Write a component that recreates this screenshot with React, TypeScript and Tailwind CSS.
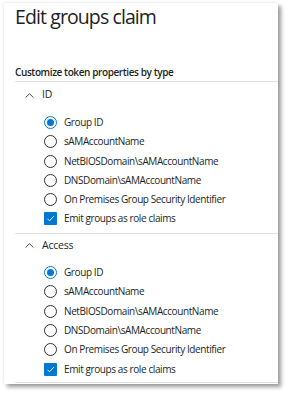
const options = [
    'Group ID',
    'sAMAccountName',
    'NetBIOSDomain\\sAMAccountName',
    'DNSDomain\\sAMAccountName',
    'On Premises Group Security Identifier',
];

const Radio: React.FC<{ checked?: boolean }> = ({ checked }) => (
    <span
        className={`flex h-[13px] w-[13px] shrink-0 items-center justify-center rounded-full border ${
            checked ? 'border-[#0078d4]' : 'border-[#323130]'
        }`}
    >
        {checked && <span className="h-[7px] w-[7px] rounded-full bg-[#0078d4]" />}
    </span>
);

const Checkbox: React.FC = () => (
    <span className="flex h-[13px] w-[13px] shrink-0 items-center justify-center rounded-[1px] bg-[#0078d4]">
        <svg width="9" height="9" viewBox="0 0 9 9" fill="none">
            <path d="M1.5 4.8 L3.5 6.8 L7.8 2.2" stroke="white" strokeWidth="0.9" />
        </svg>
    </span>
);

const Section: React.FC<{ title: string; headerClass: string; rowsClass: string }> = ({
    title,
    headerClass,
    rowsClass,
}) => (
    <div className="ml-[11px] border-b border-[#e1dfdd]">
        <div className={`flex items-center ${headerClass}`}>
            <svg width="9" height="5" viewBox="0 0 9 5" fill="none" className="ml-[10px]">
                <path d="M0.6 4.5 L4.5 0.7 L8.4 4.5" stroke="#323130" strokeWidth="0.9" />
            </svg>
            <span className="ml-[8px] text-[10.5px] tracking-[-0.2px] text-[#201f1e]">{title}</span>
        </div>
        <div className={`flex flex-col pl-[29px] ${rowsClass}`}>
            {options.map((o, i) => (
                <div key={o} className="flex h-[19.33px] items-center gap-[7px]">
                    <Radio checked={i === 0} />
                    <span className="text-[10px] tracking-[-0.4px] text-[#201f1e] whitespace-nowrap">{o}</span>
                </div>
            ))}
            <div className="flex h-[19.33px] items-center gap-[7px]">
                <Checkbox />
                <span className="text-[10px] tracking-[-0.4px] text-[#201f1e] whitespace-nowrap">
                    Emit groups as role claims
                </span>
            </div>
        </div>
    </div>
);

export default function App() {
    return (
        <div className="h-[398px] w-[288px] bg-white font-['Open_Sans',sans-serif]">
            <div className="ml-[4px] mt-[3px] h-[381px] w-[274px] bg-white shadow-[3px_3px_4px_rgba(0,0,0,0.4),-1px_-1px_2px_rgba(0,0,0,0.06)]">
                <div className="ml-[11px] h-[28px] text-[19.5px] leading-[28px] tracking-[-0.9px] text-[#201f1e]">
                    Edit groups claim
                </div>
                <div className="ml-[11px] mt-[32.7px] border-b border-[#e1dfdd] pb-[1px]">
                    <div className="h-[16px] text-[10px] font-semibold leading-[16px] tracking-[-0.4px] text-[#201f1e]">
                        Customize token properties by type
                    </div>
                </div>
                <Section title="ID" headerClass="h-[27px]" rowsClass="mt-[4px] pb-[4px]" />
                <Section title="Access" headerClass="h-[23.6px]" rowsClass="mt-[5.7px] pb-[2.7px]" />
            </div>
        </div>
    );
}
